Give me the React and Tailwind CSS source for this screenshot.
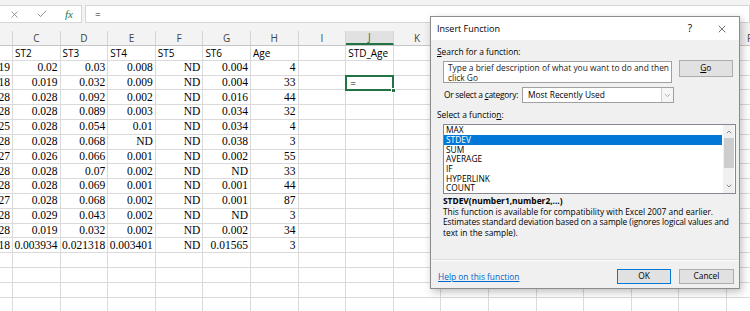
import React from 'react';
import { X, Check, ChevronDown, ChevronUp } from 'lucide-react';

const COLS = ['B', 'C', 'D', 'E', 'F', 'G', 'H', 'I', 'J', 'K', 'L', 'M', 'N', 'O', 'P', 'Q', 'R'];

const headerRow = ['', 'ST2', 'ST3', 'ST4', 'ST5', 'ST6', 'Age', '', 'STD_Age'];

const data = [
  ['19', '0.02', '0.03', '0.008', 'ND', '0.004', '4'],
  ['18', '0.019', '0.032', '0.009', 'ND', '0.004', '33'],
  ['28', '0.028', '0.092', '0.002', 'ND', '0.016', '44'],
  ['28', '0.028', '0.089', '0.003', 'ND', '0.034', '32'],
  ['25', '0.028', '0.054', '0.01', 'ND', '0.034', '4'],
  ['28', '0.028', '0.068', 'ND', 'ND', '0.038', '3'],
  ['27', '0.026', '0.066', '0.001', 'ND', '0.002', '55'],
  ['28', '0.028', '0.07', '0.002', 'ND', 'ND', '33'],
  ['28', '0.028', '0.069', '0.001', 'ND', '0.001', '44'],
  ['27', '0.028', '0.068', '0.002', 'ND', '0.001', '87'],
  ['28', '0.029', '0.043', '0.002', 'ND', 'ND', '3'],
  ['28', '0.019', '0.032', '0.002', 'ND', '0.002', '34'],
  ['18', '0.003934', '0.021318', '0.003401', 'ND', '0.01565', '3'],
];

const functions = ['MAX', 'STDEV', 'SUM', 'AVERAGE', 'IF', 'HYPERLINK', 'COUNT'];

const ui = { fontFamily: '"Open Sans", "Noto Sans", sans-serif' };
const serif = { fontFamily: '"Liberation Serif", serif' };

function HeaderRow() {
  return (
    <div className="flex h-[15px] ml-[-34.6px] bg-[#f3f3f3] border-b border-[#c6c6c6]">
      {COLS.map((c) => (
        <div
          key={c}
          className={`w-[47.6px] shrink-0 h-full border-r border-[#d4d4d4] flex items-center justify-center text-[10px] leading-none ${
            c === 'J' ? 'bg-[#e1e1e1] text-[#217346] border-b-2 border-b-[#217346]' : 'text-[#444]'
          }`}
          style={ui}
        >
          {c === 'B' ? '' : c}
        </div>
      ))}
    </div>
  );
}

function Row({ cells, text, selected }) {
  return (
    <div className="flex h-[14.8px] ml-[-34.6px]">
      {COLS.map((c, i) => {
        const v = cells ? cells[i] : '';
        return (
          <div
            key={c}
            className={`relative w-[47.6px] shrink-0 h-full border-r border-b border-[#dadada] flex items-center overflow-visible whitespace-nowrap ${
              text ? 'justify-start pl-[2px] text-[10px]' : 'justify-end pr-[2px] text-[11.5px]'
            } leading-none text-black`}
            style={text ? ui : serif}
          >
            {v}
            {selected && c === 'J' && (
              <div className="absolute left-[-1px] top-[-1px] w-[48.6px] h-[16.8px] border-2 border-[#217346] flex items-center pl-[3px] text-[10px] z-10" style={ui}>
                =
                <div className="absolute right-[-4px] bottom-[-4px] w-[5px] h-[5px] bg-[#217346] border border-white" />
              </div>
            )}
          </div>
        );
      })}
    </div>
  );
}

function Dialog() {
  return (
    <div
      className="absolute left-[430px] top-[16px] w-[310px] h-[273px] bg-[#f0f0f0] border border-[#8c8c8c] shadow-[2px_3px_8px_rgba(0,0,0,0.25)] flex flex-col text-[8.4px] text-black whitespace-nowrap"
      style={ui}
    >
      {/* title */}
      <div className="h-[23px] bg-white flex items-center pl-[6px] shrink-0">
        <span className="text-[9px]">Insert Function</span>
        <span className="ml-auto text-[10px] mr-[24px]">?</span>
        <X className="w-[12px] h-[12px] mr-[11px] text-[#222]" strokeWidth={1.3} />
      </div>

      <div className="flex flex-col px-[6px]">
        <div className="mt-[6px] h-[12px] leading-[12px]">
          <span className="underline">S</span>earch for a function:
        </div>

        <div className="flex items-start mt-[2px]">
          <div className="ml-[6px] mt-[1px] w-[231px] h-[22px] bg-white border border-[#a0a0a0] px-[4px] py-[1px] leading-[10px] text-[#222] overflow-hidden">
            Type a brief description of what you want to do and then
            <br />
            click Go
          </div>
          <div className="ml-[7px] w-[55px] h-[17px] bg-[#e1e1e1] border border-[#adadad] flex items-center justify-center">
            <span className="underline">G</span>o
          </div>
        </div>

        <div className="flex items-center mt-[4px] h-[16px]">
          <div className="ml-[7px] w-[78px] tracking-[-0.25px]">
            Or select a <span className="underline">c</span>ategory:
          </div>
          <div className="w-[152px] h-[16px] bg-white border border-[#a0a0a0] flex items-center pl-[5px]">
            <span>Most Recently Used</span>
            <div className="ml-auto w-[12px] h-full border-l border-[#cfcfcf] bg-[#f5f5f5] flex items-center justify-center">
              <ChevronDown className="w-[9px] h-[9px] text-[#777]" strokeWidth={1.5} />
            </div>
          </div>
        </div>

        <div className="mt-[6px] h-[12px] leading-[12px]">
          Select a functio<span className="underline">n</span>:
        </div>

        <div className="ml-[6px] mt-[3px] w-[293px] h-[70px] bg-white border border-[#828790] flex">
          <div className="flex-1 flex flex-col pt-[0.3px]">
            {functions.map((f) => (
              <div
                key={f}
                className={`h-[9.7px] leading-[9.7px] pl-[2px] ${f === 'STDEV' ? 'bg-[#0078d7] text-white' : ''}`}
              >
                {f}
              </div>
            ))}
          </div>
          <div className="w-[11px] ml-[1px] mr-[1px] flex flex-col items-center bg-[#f0f0f0]">
            <ChevronUp className="w-[8px] h-[8px] mt-[3px] text-[#555]" strokeWidth={2} />
            <div className="mt-[2px] w-[10px] h-[30px] bg-[#cdcdcd]" />
            <ChevronDown className="w-[8px] h-[8px] mt-auto mb-[3px] text-[#555]" strokeWidth={2} />
          </div>
        </div>

        <div className="mt-[1px] ml-[6px] h-[12px] leading-[12px] font-bold">STDEV(number1,number2,...)</div>
        <div className="mt-[0px] ml-[6px] leading-[10.3px]">
          This function is available for compatibility with Excel 2007 and earlier.
          <br />
          <span className="tracking-[-0.1px]">Estimates standard deviation based on a sample (ignores logical values and</span>
          <br />
          text in the sample).
        </div>
      </div>

      <div className="mt-[21px] h-[2px] bg-[#dcdcdc] border-b border-white" />

      <div className="flex items-start px-[7px] mt-[8px]">
        <span className="mt-[2px] text-[#0066cc] underline">Help on this function</span>
        <div className="ml-auto w-[54px] h-[15px] bg-[#e1e1e1] border border-[#0078d7] flex items-center justify-center">OK</div>
        <div className="ml-[8px] mr-[-2px] w-[55px] h-[15px] bg-[#e1e1e1] border border-[#adadad] flex items-center justify-center">Cancel</div>
      </div>
    </div>
  );
}

export default function App() {
  return (
    <div className="relative w-[750px] h-[311px] overflow-hidden bg-white">
      {/* formula bar */}
      <div className="h-[31px] bg-[#f3f3f3] flex items-start pt-[5px]">
        <div className="w-[82px] h-[18px] bg-white border-y border-r border-[#d6d6d6] flex items-center">
          <X className="ml-[9px] w-[11px] h-[11px] text-[#6a6a6a]" strokeWidth={1.5} />
          <Check className="ml-[16px] w-[12px] h-[12px] text-[#6a6a6a]" strokeWidth={1.5} />
          <span className="ml-[17px] text-[11px] italic text-[#217346] leading-none" style={serif}>
            fx
          </span>
        </div>
        <div className="ml-[3px] flex-1 h-[18px] bg-white border border-[#d6d6d6] flex items-center pl-[9px] text-[10px] text-[#222]" style={ui}>
          =
        </div>
      </div>

      <HeaderRow />
      <Row cells={headerRow} text />
      {data.map((r, i) => (
        <Row key={i} cells={r} selected={i === 1} />
      ))}
      {[0, 1, 2, 3].map((i) => (
        <Row key={'e' + i} />
      ))}

      <Dialog />
    </div>
  );
}
